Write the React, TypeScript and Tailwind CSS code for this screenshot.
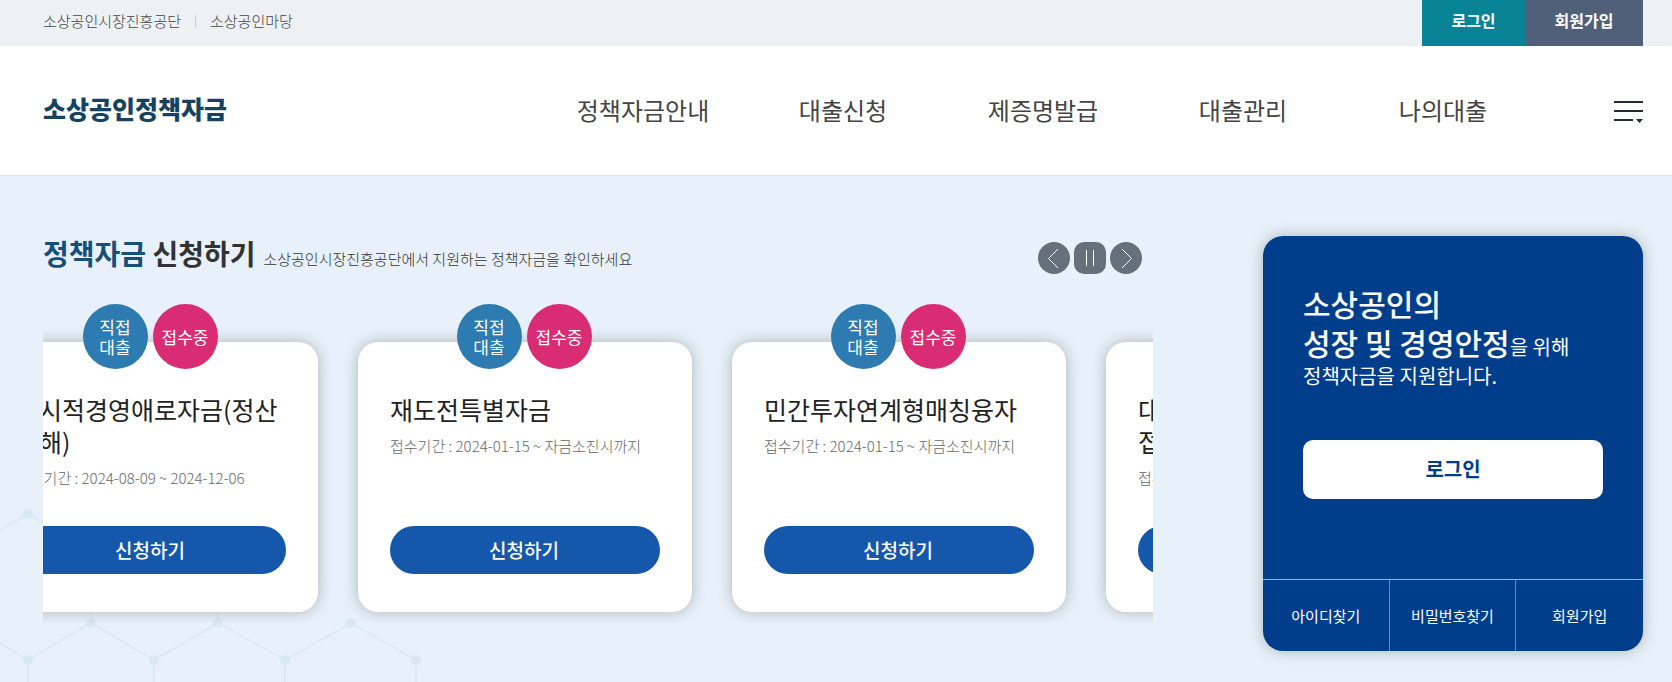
import React, { useState } from 'react';

const NAV_ITEMS = ['정책자금안내', '대출신청', '제증명발급', '대출관리', '나의대출'];

const FUNDS = [
    { title: '일시적경영애로자금(정산피해)', period: '2024-08-09 ~ 2024-12-06' },
    { title: '재도전특별자금', period: '2024-01-15 ~ 자금소진시까지' },
    { title: '민간투자연계형매칭융자', period: '2024-01-15 ~ 자금소진시까지' },
    { title: '대환대출\n접수', period: '2024-01-15 ~ 자금소진시까지' },
];

const TopBar = () => (
    <div className="flex h-[46px] justify-between bg-[#edf1f4] pl-[43px] pr-[29px]">
        <div className="flex h-[42px] items-center text-[15px] font-light text-[#444]">
            <a href="#semas">소상공인시장진흥공단</a>
            <span className="mx-[14px] h-3 w-px bg-[#c5c9cc]" />
            <a href="#madang">소상공인마당</a>
        </div>
        <div className="flex text-base font-bold leading-10 text-white">
            <a href="#login" className="w-[103px] bg-[#088395] text-center">로그인</a>
            <a href="#join" className="w-[118px] bg-[#506078] text-center">회원가입</a>
        </div>
    </div>
);

const Header = () => (
    <header className="flex h-[130px] items-center border-b border-[#dfe3e6] bg-white pl-[43px] pr-[29px]">
        <h1 className="pb-1 text-[25px] font-black text-[#14425f]">
            <a href="#home">소상공인정책자금</a>
        </h1>
        <nav className="ml-auto mr-[71px] pb-0.5">
            <ul className="flex text-2xl text-[#444]">
                {NAV_ITEMS.map((item) => (
                    <li key={item} className="w-[200px] text-center">
                        <a href="#menu">{item}</a>
                    </li>
                ))}
            </ul>
        </nav>
        <button type="button" aria-label="전체메뉴" className="pt-1">
            <svg width="29" height="23" viewBox="0 0 29 23" fill="#222a33">
                <path d="M0 0h29v2H0zM0 9h29v2H0zM0 18h19v2H0zM22 18h7l-3.500 4z" />
            </svg>
        </button>
    </header>
);

// Faint honeycomb behind the lower left corner
const Honeycomb = () => (
    <svg className="absolute bottom-0 left-0" width="440" height="182" viewBox="0 500 440 182" fill="none" aria-hidden="true">
        <path
            d="M0 530 28 514 91 550V623L28 660 0 643M28 660V682M91 623 154 660V682M154 660 218 623V550M218 623 285 660V682M285 660 351 623 416 660V682"
            stroke="#dae8f0"
            strokeWidth="1.500"
        />
        <g fill="#d9e8f0">
            <circle cx="28" cy="514" r="5" />
            <circle cx="28" cy="660" r="5" />
            <circle cx="91" cy="623" r="5" />
            <circle cx="154" cy="660" r="5" />
            <circle cx="218" cy="623" r="5" />
            <circle cx="285" cy="660" r="5" />
            <circle cx="351" cy="623" r="5" />
            <circle cx="416" cy="660" r="5" />
        </g>
    </svg>
);

const FundCard = ({ title, period }: { title: string; period: string }) => (
    <li className="relative flex h-[270px] w-[334px] shrink-0 flex-col rounded-[20px] bg-white px-8 pb-[38px] pt-[51px] shadow-[0_0_15px_rgba(0,0,0,0.25)]">
        <div className="absolute inset-x-0 -top-[38px] flex justify-center gap-[5px] pr-0.5 text-[17px] leading-5 text-white">
            <span className="flex size-[65px] items-center justify-center rounded-full bg-[#2e7bb1] text-center">
                직접
                <br />
                대출
            </span>
            <span className="flex size-[65px] items-center justify-center rounded-full bg-[#d92c73]">접수중</span>
        </div>
        <h3 className="whitespace-pre-line text-[25px] leading-8 text-[#222]">{title}</h3>
        <p className="mt-2 whitespace-nowrap text-[15px] font-light leading-[26px] text-[#666]">접수기간 : {period}</p>
        <button type="button" className="mt-auto h-12 rounded-full bg-[#1457ab] pr-0.5 text-[19px] font-medium text-white">
            신청하기
        </button>
    </li>
);

const FundSlider = () => {
    const [paused, setPaused] = useState(false);

    return (
        <section className="min-w-0 flex-1">
            <div className="flex h-11 items-start justify-between pr-[11px]">
                <div className="flex items-baseline gap-2">
                    <h2 className="text-[28px] font-bold leading-[34px] text-[#333]">
                        <span className="text-[#15507c]">정책자금</span> 신청하기
                    </h2>
                    <p className="text-[15px] font-light text-[#333]">소상공인시장진흥공단에서 지원하는 정책자금을 확인하세요</p>
                </div>
                <div className="mt-1.5 flex gap-1">
                    <button type="button" aria-label="이전" className="size-8 rounded-full bg-[#66707a]">
                        <svg width="32" height="32" viewBox="0 0 32 32" fill="none" stroke="#fff">
                            <path d="M20 7 10.500 16.500 20 26" />
                        </svg>
                    </button>
                    <button
                        type="button"
                        aria-label={paused ? '재생' : '정지'}
                        onClick={() => setPaused(!paused)}
                        className="size-8 rounded-[10px] bg-[#66707a]"
                    >
                        <svg width="32" height="32" viewBox="0 0 32 32" fill="none" stroke="#fff">
                            <path d={paused ? 'M12.500 8.500 22 16l-9.500 7.500z' : 'M12.500 8v16M19.500 8v16'} />
                        </svg>
                    </button>
                    <button type="button" aria-label="다음" className="size-8 rounded-full bg-[#66707a]">
                        <svg width="32" height="32" viewBox="0 0 32 32" fill="none" stroke="#fff">
                            <path d="M12 7 21.500 16.500 12 26" />
                        </svg>
                    </button>
                </div>
            </div>

            <div className="overflow-hidden pb-[11px] pt-[62px]">
                <ul className="-ml-[59px] flex gap-10">
                    {FUNDS.map((fund) => (
                        <FundCard key={fund.title} title={fund.title} period={fund.period} />
                    ))}
                </ul>
            </div>
        </section>
    );
};

const LoginPanel = () => (
    <aside className="flex h-[415px] w-[380px] shrink-0 flex-col overflow-hidden rounded-[20px] bg-[#003e8c] text-white shadow-[0_0_15px_rgba(0,0,0,0.25)]">
        <div className="px-10 pt-12">
            <p className="text-3xl font-medium leading-[39px]">
                소상공인의
                <br />
                성장 및 경영안정
                <span className="text-xl font-normal leading-none">을 위해</span>
            </p>
            <p className="text-xl leading-7">정책자금을 지원합니다.</p>
            <button type="button" className="mt-[50px] h-[59px] w-full rounded-[10px] bg-white pb-0.5 text-xl font-bold text-[#003e8c]">
                로그인
            </button>
        </div>
        <div className="mt-auto grid grid-cols-3 divide-x divide-white/40 border-t border-white/60 text-center text-[15px] leading-[71px]">
            <a href="#find-id">아이디찾기</a>
            <a href="#find-password">비밀번호찾기</a>
            <a href="#join">회원가입</a>
        </div>
    </aside>
);

const App = () => (
    <div className="flex min-h-screen flex-col font-['Noto_Sans_CJK_KR',sans-serif]">
        <TopBar />
        <Header />
        <main className="relative flex-1 bg-[#e8f1f9]">
            <Honeycomb />
            <div className="relative flex gap-[110px] pb-[31px] pl-[43px] pr-[29px] pt-[60px]">
                <FundSlider />
                <LoginPanel />
            </div>
        </main>
    </div>
);

export default App;
